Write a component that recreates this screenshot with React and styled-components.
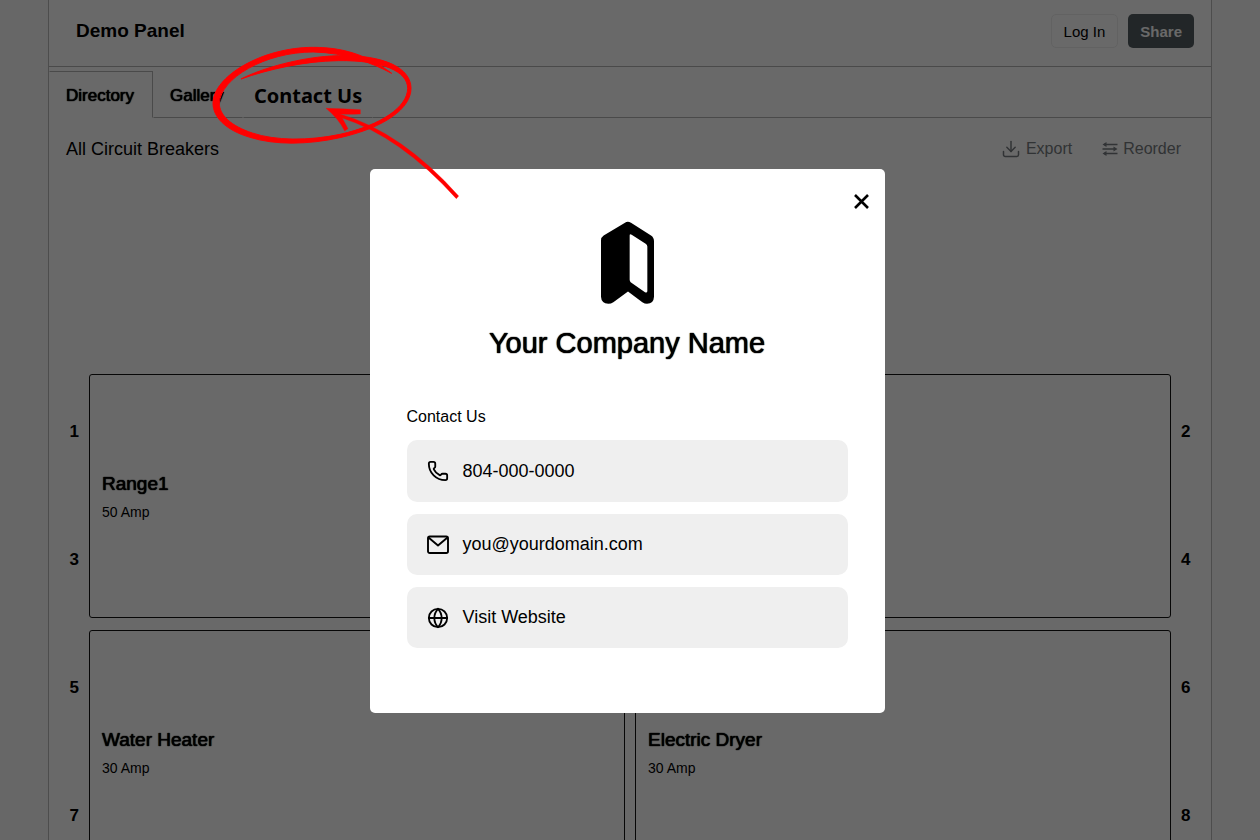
import React, { useState } from "react";
import styled, { createGlobalStyle, css } from "styled-components";
import { Download, Globe, Phone } from "lucide-react";

const breakers = [
  {
    left: { slots: [1, 3], name: "Range1", amp: "50 Amp" },
    right: { slots: [2, 4] },
  },
  {
    left: { slots: [5, 7], name: "Water Heater", amp: "30 Amp" },
    right: { slots: [6, 8], name: "Electric Dryer", amp: "30 Amp" },
  },
];

const ReorderIcon = () => (
  <svg width="16" height="14" viewBox="0 0 16 14" fill="none" stroke="currentColor" strokeWidth="1.5">
    <path d="M2 2.5h13.5M.5 7h13.5M2 11.5h13.5" />
    <path d="M4.5 0v5L.5 2.5zM11.5 4.5v5L15.5 7zM4.5 9v5L.5 11.5z" fill="currentColor" stroke="none" />
  </svg>
);

const MailIcon = () => (
  <svg width="22" height="22" viewBox="0 0 22 22" fill="none" stroke="currentColor" strokeWidth="1.9" strokeLinejoin="round">
    <rect x="1" y="2.5" width="20" height="16.5" rx="1.8" />
    <path d="M1.5 3.5L11 11.5 20.5 3.5" />
  </svg>
);

const CloseIcon = () => (
  <svg width="15" height="15" viewBox="0 0 15 15" fill="none" stroke="currentColor" strokeWidth="2.6">
    <path d="M1 1l13 13M14 1L1 14" />
  </svg>
);

const CompanyLogo = () => (
  <svg width="53" height="83" viewBox="0 0 159 248">
    <path d="M72 5Q80-2 90 5L150 43Q159 49 159 60V227Q158 248 138 248Q131 248 124 243L81 211L37 243Q30 248 22 248Q1 247 0 227V58Q0 48 8 43Z" />
    <path
      fill="#fff"
      d="M86 43Q86 37 92 41L134 68Q139 71 139 76V210Q138 216 132 213L89 183Q86 180 86 176Z"
    />
  </svg>
);

const Breaker = ({ data }) => (
  <BreakerBox>
    {data.name && <BreakerName>{data.name}</BreakerName>}
    {data.amp && <BreakerAmp>{data.amp}</BreakerAmp>}
  </BreakerBox>
);

const Slots = ({ numbers, side }) => (
  <SlotColumn $side={side}>
    {numbers.map((n) => (
      <span key={n}>{n}</span>
    ))}
  </SlotColumn>
);

const App = () => {
  const [open, setOpen] = useState(true);

  return (
    <>
      <GlobalStyle />
      <Page>
        <Panel>
          <Header>
            <PanelTitle>Demo Panel</PanelTitle>
            <HeaderActions>
              <LogInButton type="button">Log In</LogInButton>
              <ShareButton type="button">Share</ShareButton>
            </HeaderActions>
          </Header>

          <Tabs>
            <Tab type="button" $active>
              Directory
            </Tab>
            <Tab type="button">Gallery</Tab>
            <ContactTab type="button" onClick={() => setOpen(true)}>
              Contact Us
              <Scribble viewBox="0 0 780 495" aria-hidden="true">
                <path
                  strokeWidth="3"
                  d="M108 117C170 85 290 50 400 47C540 44 618 85 618 145C618 205 540 262 405 293C310 314 210 316 135 292C60 270 24 230 24 190C24 110 170 22 325 22C430 22 500 55 560 100C500 68 420 38 325 36C180 36 46 115 43 190C43 225 78 258 142 279C210 302 310 303 405 283C530 255 608 200 608 145C608 95 535 60 400 62C300 63 190 88 108 117Z"
                />
                <path d="M363 205Q410 206 466 209L466 222Q430 224 405 222Q590 276 761 468L754 476Q586 290 412 234L429 266L419 273Q400 235 363 205Z" />
              </Scribble>
            </ContactTab>
          </Tabs>

          <Toolbar>
            <ToolbarTitle>All Circuit Breakers</ToolbarTitle>
            <ToolbarActions>
              <ToolButton type="button">
                <Download size={20} strokeWidth={1.8} />
                Export
              </ToolButton>
              <ToolButton type="button">
                <ReorderIcon />
                Reorder
              </ToolButton>
            </ToolbarActions>
          </Toolbar>

          <Directory>
            {breakers.map((row) => (
              <BreakerRow key={row.left.slots[0]}>
                <Slots numbers={row.left.slots} side="left" />
                <Breaker data={row.left} />
                <Breaker data={row.right} />
                <Slots numbers={row.right.slots} side="right" />
              </BreakerRow>
            ))}
          </Directory>
        </Panel>
      </Page>

      {open && (
        <Overlay>
          <Modal role="dialog" aria-labelledby="company">
            <CloseButton type="button" aria-label="Close" onClick={() => setOpen(false)}>
              <CloseIcon />
            </CloseButton>
            <CompanyLogo />
            <CompanyName id="company">Your Company Name</CompanyName>
            <ContactLabel>Contact Us</ContactLabel>
            <ContactList>
              <ContactLink href="tel:8040000000">
                <Phone size={22} />
                804-000-0000
              </ContactLink>
              <ContactLink href="mailto:you@yourdomain.com">
                <MailIcon />
                you@yourdomain.com
              </ContactLink>
              <ContactLink href="#website">
                <Globe size={22} />
                Visit Website
              </ContactLink>
            </ContactList>
          </Modal>
        </Overlay>
      )}
    </>
  );
};

const GlobalStyle = createGlobalStyle`
  * {
    box-sizing: border-box;
  }
  body {
    margin: 0;
    height: 100vh;
    overflow: hidden;
    background-color: #fbfbfb;
    color: #000;
    font-family: "Liberation Sans", Arial, sans-serif;
  }
  button {
    padding: 0;
    border: none;
    background: none;
    color: inherit;
    font-family: inherit;
    cursor: pointer;
  }
  h1, h2, h3, p {
    margin: 0;
  }
`;

/* the family has no 500 weight, a soft edge stands in for it */
const medium = css`
  font-weight: 400;
  text-shadow: 0 0 1px #000, 0 0 1px #000;
`;

const Page = styled.div`
  padding: 0 48px;
`;

const Panel = styled.main`
  min-height: 100vh;
  border: 1px solid #bbb;
  border-width: 0 1px;
  background-color: #fff;
`;

const Header = styled.header`
  display: flex;
  align-items: center;
  justify-content: space-between;
  height: 67px;
  padding: 0 17px 4px 27px;
  border-bottom: 1px solid #b4b4b4;
`;

const PanelTitle = styled.h1`
  font-size: 19px;
  line-height: 24px;
  font-weight: 700;
`;

const HeaderActions = styled.div`
  display: flex;
  gap: 10px;
`;

const HeaderButton = styled.button`
  height: 34px;
  padding: 0 12px;
  border-radius: 5px;
  font-size: 15px;
`;

const LogInButton = styled(HeaderButton)`
  border: 1px solid #eee;
`;

const ShareButton = styled(HeaderButton)`
  background-color: #545d61;
  color: #fff;
  font-weight: 700;
`;

const Tabs = styled.nav`
  display: flex;
  height: 47px;
  margin-top: 4px;

  &::after {
    content: "";
    flex: 1;
    border-bottom: 1px solid #b4b4b4;
  }
`;

const Tab = styled.button`
  padding: 2px 18px 0 16px;
  font-size: 17px;
  border: 1px solid transparent;
  border-bottom-color: #b4b4b4;
  ${medium}

  ${({ $active }) =>
    $active &&
    css`
      border-color: #b4b4b4 #b4b4b4 transparent transparent;
    `}
`;

const ContactTab = styled(Tab)`
  position: relative;
  padding: 2px 10px 0;
  font-family: "Noto Sans", sans-serif;
  font-size: 20px;
  font-weight: 700;
  text-shadow: none;
`;

const Scribble = styled.svg`
  position: absolute;
  top: -32px;
  left: -39px;
  z-index: 20;
  width: 260px;
  height: 165px;
  fill: #f00;
  stroke: #f00;
  pointer-events: none;
`;

const Toolbar = styled.div`
  display: flex;
  align-items: center;
  justify-content: space-between;
  height: 62px;
  padding: 0 30px 0 17px;
`;

const ToolbarTitle = styled.h2`
  font-size: 18px;
  font-weight: 400;
`;

const ToolbarActions = styled.div`
  display: flex;
  gap: 30px;
`;

const ToolButton = styled.button`
  display: flex;
  align-items: center;
  gap: 5px;
  color: #777c80;
  font-size: 16px;
`;

const Directory = styled.section`
  padding-top: 188px;
`;

const BreakerRow = styled.div`
  display: grid;
  grid-template-columns: 30px 1fr 1fr 30px;
  column-gap: 10px;
  height: 256px;
`;

const SlotColumn = styled.div`
  display: grid;
  grid-template-rows: 1fr 1fr;
  align-items: center;
  text-align: ${({ $side }) => ($side === "left" ? "right" : "left")};
  font-size: 17px;
  font-weight: 700;
`;

const BreakerBox = styled.article`
  display: flex;
  flex-direction: column;
  justify-content: center;
  gap: 8px;
  margin: 6px 0;
  padding-left: 12px;
  border: 1px solid #111;
  border-radius: 3px;
`;

const BreakerName = styled.h3`
  font-size: 19px;
  line-height: 24px;
  ${medium}
`;

const BreakerAmp = styled.p`
  font-size: 14px;
  line-height: 16px;
`;

const Overlay = styled.div`
  position: fixed;
  inset: 0;
  z-index: 10;
  display: grid;
  place-items: center;
  padding: 42px 6px 0 0;
  background-color: rgba(0, 0, 0, 0.59);
`;

const Modal = styled.section`
  position: relative;
  display: flex;
  flex-direction: column;
  align-items: center;
  width: 100%;
  max-width: 515px;
  padding: 52px 37px 65px;
  border-radius: 5px;
  background-color: #fff;
`;

const CloseButton = styled.button`
  position: absolute;
  top: 20px;
  right: 11px;
  display: grid;
  place-items: center;
  width: 25px;
  height: 25px;
`;

const CompanyName = styled.h2`
  margin-top: 21px;
  font-size: 29px;
  line-height: 36px;
  ${medium}
`;

const ContactLabel = styled.p`
  align-self: flex-start;
  margin-top: 46px;
  font-size: 16px;
  line-height: 20px;
`;

const ContactList = styled.div`
  display: grid;
  gap: 12px;
  width: 100%;
  margin-top: 13px;
`;

const ContactLink = styled.a`
  display: flex;
  align-items: center;
  gap: 14px;
  height: 62px;
  padding: 0 20px;
  border-radius: 10px;
  background-color: #efefef;
  color: #000;
  font-size: 18px;
  text-decoration: none;

  &:not(:first-child) {
    height: 61px;
  }
`;

export default App;
